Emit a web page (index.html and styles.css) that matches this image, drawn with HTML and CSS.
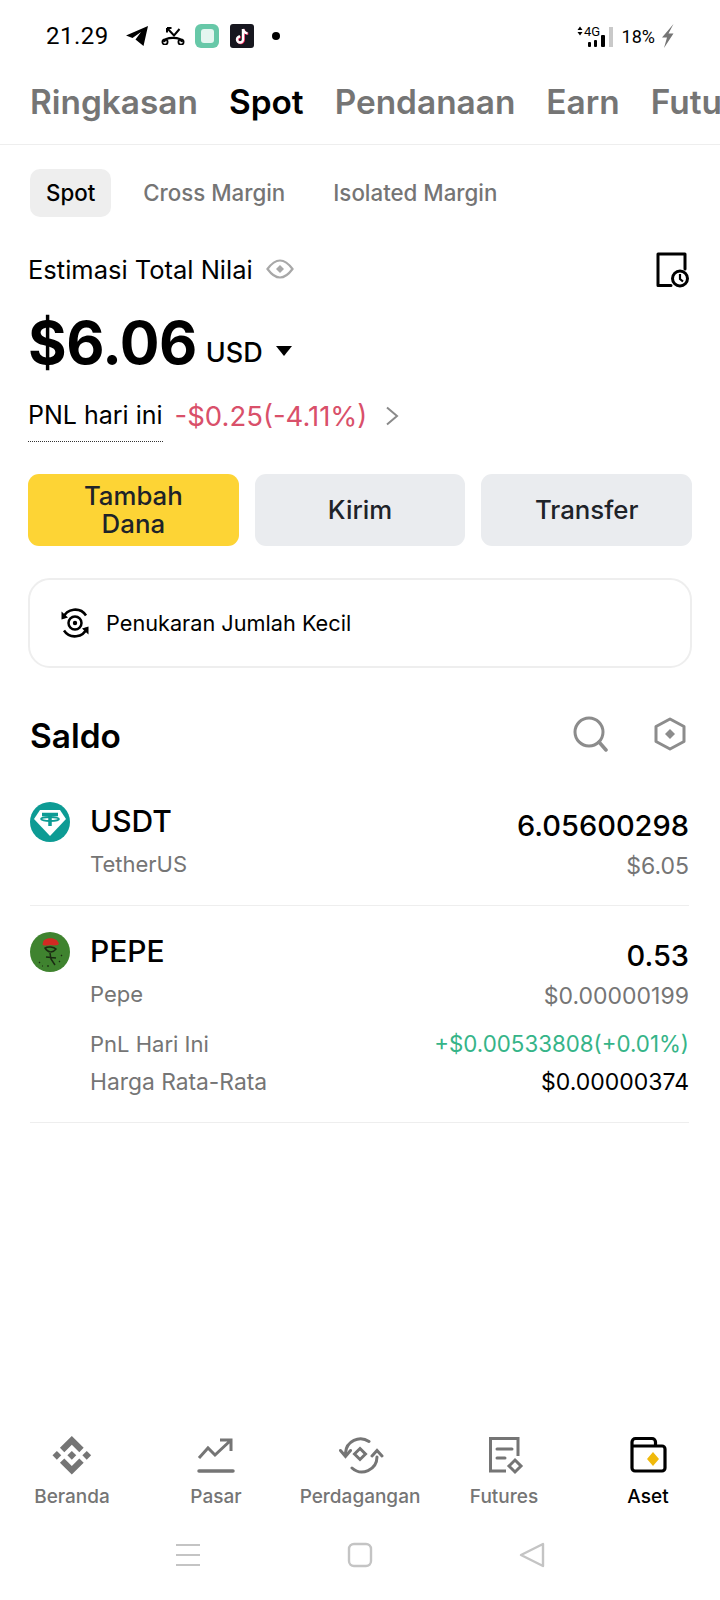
FILE: index.html
```html
<!DOCTYPE html>
<html lang="id">
<head>
  <meta charset="UTF-8">
  <meta name="viewport" content="width=device-width, initial-scale=1.0">
  <title>Aset Spot</title>
  <link rel="stylesheet" href="styles.css">
</head>
<body>
  <div class="page">
    <!-- status bar -->
    <div class="status-bar">
      <span class="clock">21.29</span>
      <svg class="st-telegram" width="22" height="20" viewBox="0 0 22 20"><path d="M22 0 L0 9.500 L6.500 12 L15 6 L9.500 13.500 L17.500 20 Z" fill="#000"/></svg>
      <svg class="st-call" width="24" height="18" viewBox="0 0 24 18"><path d="M6 1 L13 8.500 L18.500 2 M6 1 V5.500 M6 1 H10.500" fill="none" stroke="#000" stroke-width="2"/><path d="M3 15 C4 9.500 20 9.500 21 15" fill="none" stroke="#000" stroke-width="2.200"/><circle cx="4" cy="15" r="2.600" fill="none" stroke="#000" stroke-width="1.800"/><circle cx="20" cy="15" r="2.600" fill="none" stroke="#000" stroke-width="1.800"/></svg>
      <svg class="st-app" width="24" height="24" viewBox="0 0 24 24"><rect width="24" height="24" rx="6" fill="#67c8a8"/><rect x="6" y="5" width="13" height="14" rx="3" fill="#e4f6f0"/></svg>
      <svg class="st-tiktok" width="24" height="24" viewBox="0 0 24 24"><rect width="24" height="24" rx="3" fill="#17171f"/><path d="M13 5 V15.500 A3 3 0 1 1 10 12.500" fill="none" stroke="#f2295b" stroke-width="2.400" transform="translate(.8 .6)"/><path d="M13 5 C13.400 7.600 15 9 17.500 9.200" fill="none" stroke="#f2295b" stroke-width="2.400" transform="translate(.8 .6)"/><path d="M13 5 V15.500 A3 3 0 1 1 10 12.500" fill="none" stroke="#fff" stroke-width="2.400"/><path d="M13 5 C13.400 7.600 15 9 17.500 9.200" fill="none" stroke="#fff" stroke-width="2.400"/></svg>
      <span class="st-dot"></span>
      <span class="status-right">
        <svg width="37" height="24" viewBox="0 0 37 24"><path d="M0.500 6 L3 2.500 L5.500 6Z M0.500 8 L3 11.500 L5.500 8Z" fill="#000"/><text x="7" y="12" class="st-net">4G</text><rect x="11" y="18" width="3" height="5" rx="1" fill="#000"/><rect x="17" y="16" width="3" height="7" rx="1" fill="#000"/><rect x="24" y="11" width="4" height="12" rx="1" fill="#000"/><rect x="32" y="3" width="4" height="20" fill="#c9c9c9"/></svg>
        <span class="battery">18%</span>
        <svg width="13" height="24" viewBox="0 0 13 24"><path d="M12.500 0 L1 13.500 H6 L3 24 L12.500 9.500 H7.500 Z" fill="#757575"/></svg>
      </span>
    </div>

    <!-- top tabs -->
    <div class="tabs">
      <span class="tab">Ringkasan</span>
      <span class="tab active">Spot</span>
      <span class="tab">Pendanaan</span>
      <span class="tab">Earn</span>
      <span class="tab">Futures</span>
    </div>

    <div class="chips">
      <span class="chip active">Spot</span>
      <span class="chip">Cross Margin</span>
      <span class="chip">Isolated Margin</span>
    </div>

    <div class="summary">
      <div class="summary-head">
        <span class="summary-label">Estimasi Total Nilai</span>
        <svg width="28" height="20" viewBox="0 0 28 20"><path d="M1.500 10 C7 2.500 10.500 1.500 14 1.500 C17.500 1.500 21 2.500 26.500 10 C21 17.500 17.500 18.500 14 18.500 C10.500 18.500 7 17.500 1.500 10Z" fill="none" stroke="#a8a8a8" stroke-width="2.200"/><path d="M14 6 L18 10 L14 14 L10 10Z" fill="#a8a8a8"/></svg>
        <svg class="history-icon" width="34" height="36" viewBox="0 0 34 36"><path d="M15 33.500 H2 V2 H29 V17" fill="none" stroke="#000" stroke-width="3" stroke-linejoin="round" stroke-linecap="round"/><circle cx="24" cy="26.500" r="7.500" fill="none" stroke="#000" stroke-width="3"/><path d="M24 22 V27 L27 29.500" fill="none" stroke="#000" stroke-width="2.200"/></svg>
      </div>
      <div class="total">
        <span class="total-value">$6.06</span>
        <span class="total-unit">USD</span>
        <span class="caret"></span>
      </div>
      <div class="pnl">
        <span class="pnl-label">PNL hari ini</span>
        <span class="pnl-value">-$0.25(-4.11%)</span>
        <svg width="14" height="20" viewBox="0 0 14 20"><path d="M2 1.500 L12 10 L2 18.500" fill="none" stroke="#8a8a8a" stroke-width="2"/></svg>
      </div>
    </div>

    <div class="actions">
      <button class="btn btn-primary">Tambah Dana</button>
      <button class="btn">Kirim</button>
      <button class="btn">Transfer</button>
    </div>

    <div class="convert-card">
      <svg width="30" height="30" viewBox="0 0 30 30"><circle cx="15" cy="15" r="6.500" fill="none" stroke="#000" stroke-width="2.500"/><circle cx="15" cy="15" r="2.200" fill="#000"/><path d="M3 10 A13 13 0 0 1 26 7.500" fill="none" stroke="#000" stroke-width="2.500"/><path d="M27 20 A13 13 0 0 1 4 22.500" fill="none" stroke="#000" stroke-width="2.500"/><path d="M1.500 3.500 L8 9.500 L1.500 11.500Z M28.500 26.500 L22 20.500 L28.500 18.500Z" fill="#000"/></svg>
      <span>Penukaran Jumlah Kecil</span>
    </div>

    <div class="balance-head">
      <h2>Saldo</h2>
      <svg class="search-icon" width="36" height="36" viewBox="0 0 36 36"><circle cx="17" cy="16" r="14" fill="none" stroke="#8c8c8c" stroke-width="3"/><path d="M27 26 L34 34" stroke="#8c8c8c" stroke-width="3.500" stroke-linecap="round"/></svg>
      <svg class="token-icon" width="32" height="34" viewBox="0 0 32 34"><path d="M16 2 L30 9.500 V24.500 L16 32 L2 24.500 V9.500Z" fill="none" stroke="#8c8c8c" stroke-width="3" stroke-linejoin="round"/><path d="M16 12 L21 17 L16 22 L11 17Z" fill="#8c8c8c"/></svg>
    </div>

    <div class="asset">
      <div class="asset-main">
        <svg class="coin" width="40" height="40" viewBox="0 0 40 40"><circle cx="20" cy="20" r="20" fill="#0d9b94"/><path d="M10 8 H30 L36 17 L20 34 L4 17Z" fill="#fff"/><path d="M12 12.500 H28 M20 12.500 V24" stroke="#0d9b94" stroke-width="3.500" fill="none"/><ellipse cx="20" cy="17" rx="9" ry="2" fill="none" stroke="#0d9b94" stroke-width="1.800"/></svg>
        <div class="asset-col">
          <div class="asset-symbol">USDT</div>
          <div class="asset-name">TetherUS</div>
        </div>
        <div class="asset-amounts">
          <div class="asset-qty">6.05600298</div>
          <div class="asset-fiat">$6.05</div>
        </div>
      </div>
    </div>

    <div class="asset">
      <div class="asset-main">
        <svg class="coin" width="40" height="40" viewBox="0 0 40 40"><circle cx="20" cy="20" r="20" fill="#3f832f"/><path d="M13 11 C13 5 26 5 28 10 C31 13 26 14 20 13 C16 14 11 14 13 11Z" fill="#d32a22"/><path d="M15 16 C18 14 24 15 26 17 C23 21 18 21 15 16Z M20 21 L21 27 L25 33 M16 25 L26 26" fill="none" stroke="#1a2a12" stroke-width="1.500"/><path d="M9 30 L10 31 M12 34 L13 34 M29 29 L30 30 M31 23 L32 24 M18 33 L18 35" stroke="#1a2a12" stroke-width="1.200"/></svg>
        <div class="asset-col">
          <div class="asset-symbol">PEPE</div>
          <div class="asset-name">Pepe</div>
        </div>
        <div class="asset-amounts">
          <div class="asset-qty">0.53</div>
          <div class="asset-fiat">$0.00000199</div>
        </div>
      </div>
      <div class="asset-row pnl-row">
        <span class="row-label">PnL Hari Ini</span>
        <span class="row-up">+$0.00533808(+0.01%)</span>
      </div>
      <div class="asset-row">
        <span class="row-label row-wide">Harga Rata-Rata</span>
        <span>$0.00000374</span>
      </div>
    </div>

    <!-- bottom nav -->
    <nav class="bottom-nav">
      <div class="nav-item">
        <svg width="48" height="40" viewBox="0 0 48 40"><g transform="translate(4.500 1) scale(.305)" fill="#757575"><path d="M38.730 53.200l24.590-24.580 24.600 24.600 14.300-14.310L63.320 0 24.420 38.900l14.310 14.300z"/><path d="M0 63.310l14.300-14.310 14.310 14.310-14.310 14.300z"/><path d="M38.730 73.410L63.320 98l24.600-24.600 14.310 14.290-38.900 38.910-38.910-38.880-.02-.02 14.320-14.300z"/><path d="M98 63.310l14.300-14.310 14.310 14.300-14.310 14.320z"/><path d="M77.830 63.300L63.320 48.780 48.810 63.280l14.510 14.500 14.510-14.480z"/></g></svg>
        <span>Beranda</span>
      </div>
      <div class="nav-item">
        <svg width="48" height="40" viewBox="0 0 48 40"><path d="M7 23 L16 13 L23 20 L38 6 M28 5 H39 V16" fill="none" stroke="#757575" stroke-width="3"/><path d="M7 36 H41" stroke="#757575" stroke-width="3.500" stroke-linecap="round"/></svg>
        <span>Pasar</span>
      </div>
      <div class="nav-item">
        <svg width="48" height="40" viewBox="0 0 48 40"><path d="M9.500 18 A15 15 0 0 1 33 6.500" fill="none" stroke="#757575" stroke-width="3" stroke-linecap="round"/><path d="M41 22 A15 15 0 0 1 16 33" fill="none" stroke="#757575" stroke-width="3" stroke-linecap="round"/><path d="M4.500 15.500 L9.500 21.500 L14.500 15.500 M36 21 L41 15.500 L46 21" fill="none" stroke="#757575" stroke-width="3" stroke-linecap="round"/><path d="M24 13.500 L29.500 19 L24 24.500 L18.500 19Z" fill="none" stroke="#757575" stroke-width="3"/></svg>
        <span>Perdagangan</span>
      </div>
      <div class="nav-item">
        <svg width="48" height="40" viewBox="0 0 48 40"><path d="M38 21 V3.500 H10.500 V36 H26" fill="none" stroke="#757575" stroke-width="3"/><path d="M17 14 H32 M17 23 H25" stroke="#757575" stroke-width="3" stroke-linecap="round"/><path d="M35 25 L41 31 L35 37 L29 31Z" fill="none" stroke="#757575" stroke-width="3"/></svg>
        <span>Futures</span>
      </div>
      <div class="nav-item active">
        <svg width="48" height="40" viewBox="0 0 48 40"><path d="M8 33 V7 A3.500 3.500 0 0 1 11.500 3.500 H28 A3.500 3.500 0 0 1 31.500 7 V11 H38 A3 3 0 0 1 41 14 V33 A3 3 0 0 1 38 36 H11 A3 3 0 0 1 8 33Z M8 11 H31.500" fill="none" stroke="#000" stroke-width="3.200"/><path d="M29 17 L35 24 L29 31 L23 24Z" fill="#f0b90b"/></svg>
        <span>Aset</span>
      </div>
    </nav>

    <!-- system nav -->
    <div class="system-nav">
      <svg width="26" height="24" viewBox="0 0 26 24"><path d="M1 2 H25 M1 12 H25 M1 22 H25" stroke="#c4c4c4" stroke-width="2.200"/></svg>
      <svg width="26" height="26" viewBox="0 0 26 26"><rect x="2" y="2" width="22" height="22" rx="5" fill="none" stroke="#c4c4c4" stroke-width="2.400"/></svg>
      <svg width="26" height="26" viewBox="0 0 26 26"><path d="M24 2 V24 L2 13Z" fill="none" stroke="#c4c4c4" stroke-width="2.400" stroke-linejoin="round"/></svg>
    </div>
  </div>
</body>
</html>
```

FILE: styles.css
```css
:root {
  --text-color: #000000;
  --text-secondary: #757575;
  --border-color: #eeeeee;
  --yellow: #fdd435;
  --button-grey: #eaecef;
  --red: #d9506a;
  --green: #35b488;
}

* {
  box-sizing: border-box;
}

body {
  margin: 0;
  background-color: #ffffff;
  color: var(--text-color);
  font-family: Inter, "Liberation Sans", sans-serif;
}

.page {
  width: 720px;
  height: 1600px;
  display: flex;
  flex-direction: column;
  overflow: hidden;
}

/* status bar */
.status-bar {
  height: 72px;
  display: flex;
  align-items: center;
  padding: 0 46px;
  font-family: Roboto, sans-serif;
}

.clock {
  font-size: 24px;
  letter-spacing: 0.5px;
  margin-right: 17px;
}

.st-call {
  margin-left: 13px;
}

.st-app {
  margin-left: 10px;
}

.st-tiktok {
  margin-left: 11px;
}

.st-dot {
  width: 8px;
  height: 8px;
  border-radius: 50%;
  background-color: #000;
  margin-left: 18px;
}

.status-right {
  margin-left: auto;
  display: flex;
  align-items: center;
  gap: 6px;
}

.st-net {
  font-size: 13px;
  font-family: Roboto, sans-serif;
}

.battery {
  font-size: 18px;
  margin-left: 2px;
}

/* tabs */
.tabs {
  height: 73px;
  display: flex;
  align-items: center;
  gap: 31px;
  padding: 0 0 12px 30px;
  border-bottom: 1px solid var(--border-color);
  white-space: nowrap;
  overflow: hidden;
}

.tab {
  font-size: 33.4px;
  font-weight: 600;
  color: var(--text-secondary);
}

.tab.active {
  color: var(--text-color);
}

.chips {
  display: flex;
  gap: 16px;
  padding: 24px 30px 0;
}

.chip {
  height: 48px;
  line-height: 48px;
  padding: 0 16px;
  border-radius: 10px;
  font-size: 22.3px;
  font-weight: 500;
  color: var(--text-secondary);
}

.chip.active {
  background-color: var(--border-color);
  color: var(--text-color);
}

/* summary */
.summary {
  padding: 34px 30px 0 28px;
}

.summary-head {
  display: flex;
  align-items: center;
  gap: 13px;
  height: 36px;
}

.summary-label {
  font-size: 25.5px;
}

.history-icon {
  margin-left: auto;
  margin-top: 2px;
}

.total {
  display: flex;
  align-items: center;
  margin-top: 17px;
}

.total-value {
  font-size: 59px;
  font-weight: 700;
  letter-spacing: -0.5px;
  line-height: 78px;
}

.total-unit {
  font-size: 27px;
  font-weight: 500;
  margin-left: 9px;
  margin-top: 18px;
}

.caret {
  width: 0;
  height: 0;
  border-left: 8px solid transparent;
  border-right: 8px solid transparent;
  border-top: 10px solid #000;
  margin-left: 13px;
  margin-top: 16px;
}

.pnl {
  display: flex;
  align-items: center;
  gap: 12px;
  margin-top: 7px;
}

.pnl-label {
  font-size: 25px;
  line-height: 30px;
  padding-bottom: 11px;
  margin-top: 11px;
  border-bottom: 1px dotted #333;
}

.pnl-value {
  font-size: 27.5px;
  color: var(--red);
  margin-right: 6px;
}

/* action buttons */
.actions {
  display: flex;
  gap: 16px;
  padding: 32px 28px 0;
}

.btn {
  flex: 1;
  height: 72px;
  border: none;
  border-radius: 11px;
  background-color: var(--button-grey);
  color: #1e2329;
  font-family: inherit;
  font-size: 25.8px;
  font-weight: 500;
  line-height: 28px;
  padding: 0 30px;
}

.btn-primary {
  background-color: var(--yellow);
}

.convert-card {
  margin: 32px 28px 0 28px;
  height: 90px;
  border: 2px solid var(--border-color);
  border-radius: 22px;
  display: flex;
  align-items: center;
  gap: 16px;
  padding-left: 30px;
  font-size: 21.7px;
}

/* balance list */
.balance-head {
  display: flex;
  align-items: center;
  padding: 48px 34px 0 30px;
}

.balance-head h2 {
  margin: 0;
  font-size: 33.4px;
  font-weight: 600;
  line-height: 40px;
  margin-right: auto;
}

.search-icon {
  margin-right: 46px;
  margin-bottom: 4px;
}

.token-icon {
  margin-bottom: 4px;
}

.asset {
  margin: 0 31px 0 30px;
  border-bottom: 1px solid var(--border-color);
}

.asset-main {
  display: flex;
  align-items: flex-start;
  gap: 20px;
  padding-top: 26px;
}

.balance-head + .asset .asset-main {
  padding-top: 46px;
}

.coin {
  flex-shrink: 0;
}

.asset-symbol {
  font-size: 30px;
  font-weight: 500;
  line-height: 38px;
}

.asset-name {
  font-size: 22px;
  color: var(--text-secondary);
  line-height: 28px;
  margin-top: 10px;
}

.asset-amounts {
  margin-left: auto;
  text-align: right;
  padding-top: 5px;
}

.asset-qty {
  font-size: 29px;
  font-weight: 500;
  line-height: 38px;
}

.asset-fiat {
  font-size: 23px;
  color: var(--text-secondary);
  line-height: 28px;
  margin-top: 7px;
}

.balance-head + .asset .asset-col {
  margin-bottom: 27px;
}

.asset-row {
  display: flex;
  justify-content: space-between;
  margin-left: 60px;
  font-size: 23px;
  line-height: 28px;
  margin-top: 10px;
  margin-bottom: 26px;
}

.pnl-row {
  margin-top: 20px;
  margin-bottom: 9px;
}

.row-label {
  font-size: 22px;
  color: var(--text-secondary);
}

.row-wide {
  font-size: 22.8px;
}

.row-up {
  font-size: 22.3px;
  color: var(--green);
}

/* bottom nav */
.bottom-nav {
  margin-top: auto;
  display: grid;
  grid-template-columns: repeat(5, 1fr);
  padding-bottom: 2px;
}

.nav-item {
  display: flex;
  flex-direction: column;
  align-items: center;
  gap: 10px;
  font-size: 19px;
  font-weight: 500;
  color: var(--text-secondary);
  white-space: nowrap;
}

.nav-item.active {
  color: var(--text-color);
}

.system-nav {
  height: 90px;
  display: flex;
  align-items: center;
  justify-content: center;
  gap: 146px;
}
```
